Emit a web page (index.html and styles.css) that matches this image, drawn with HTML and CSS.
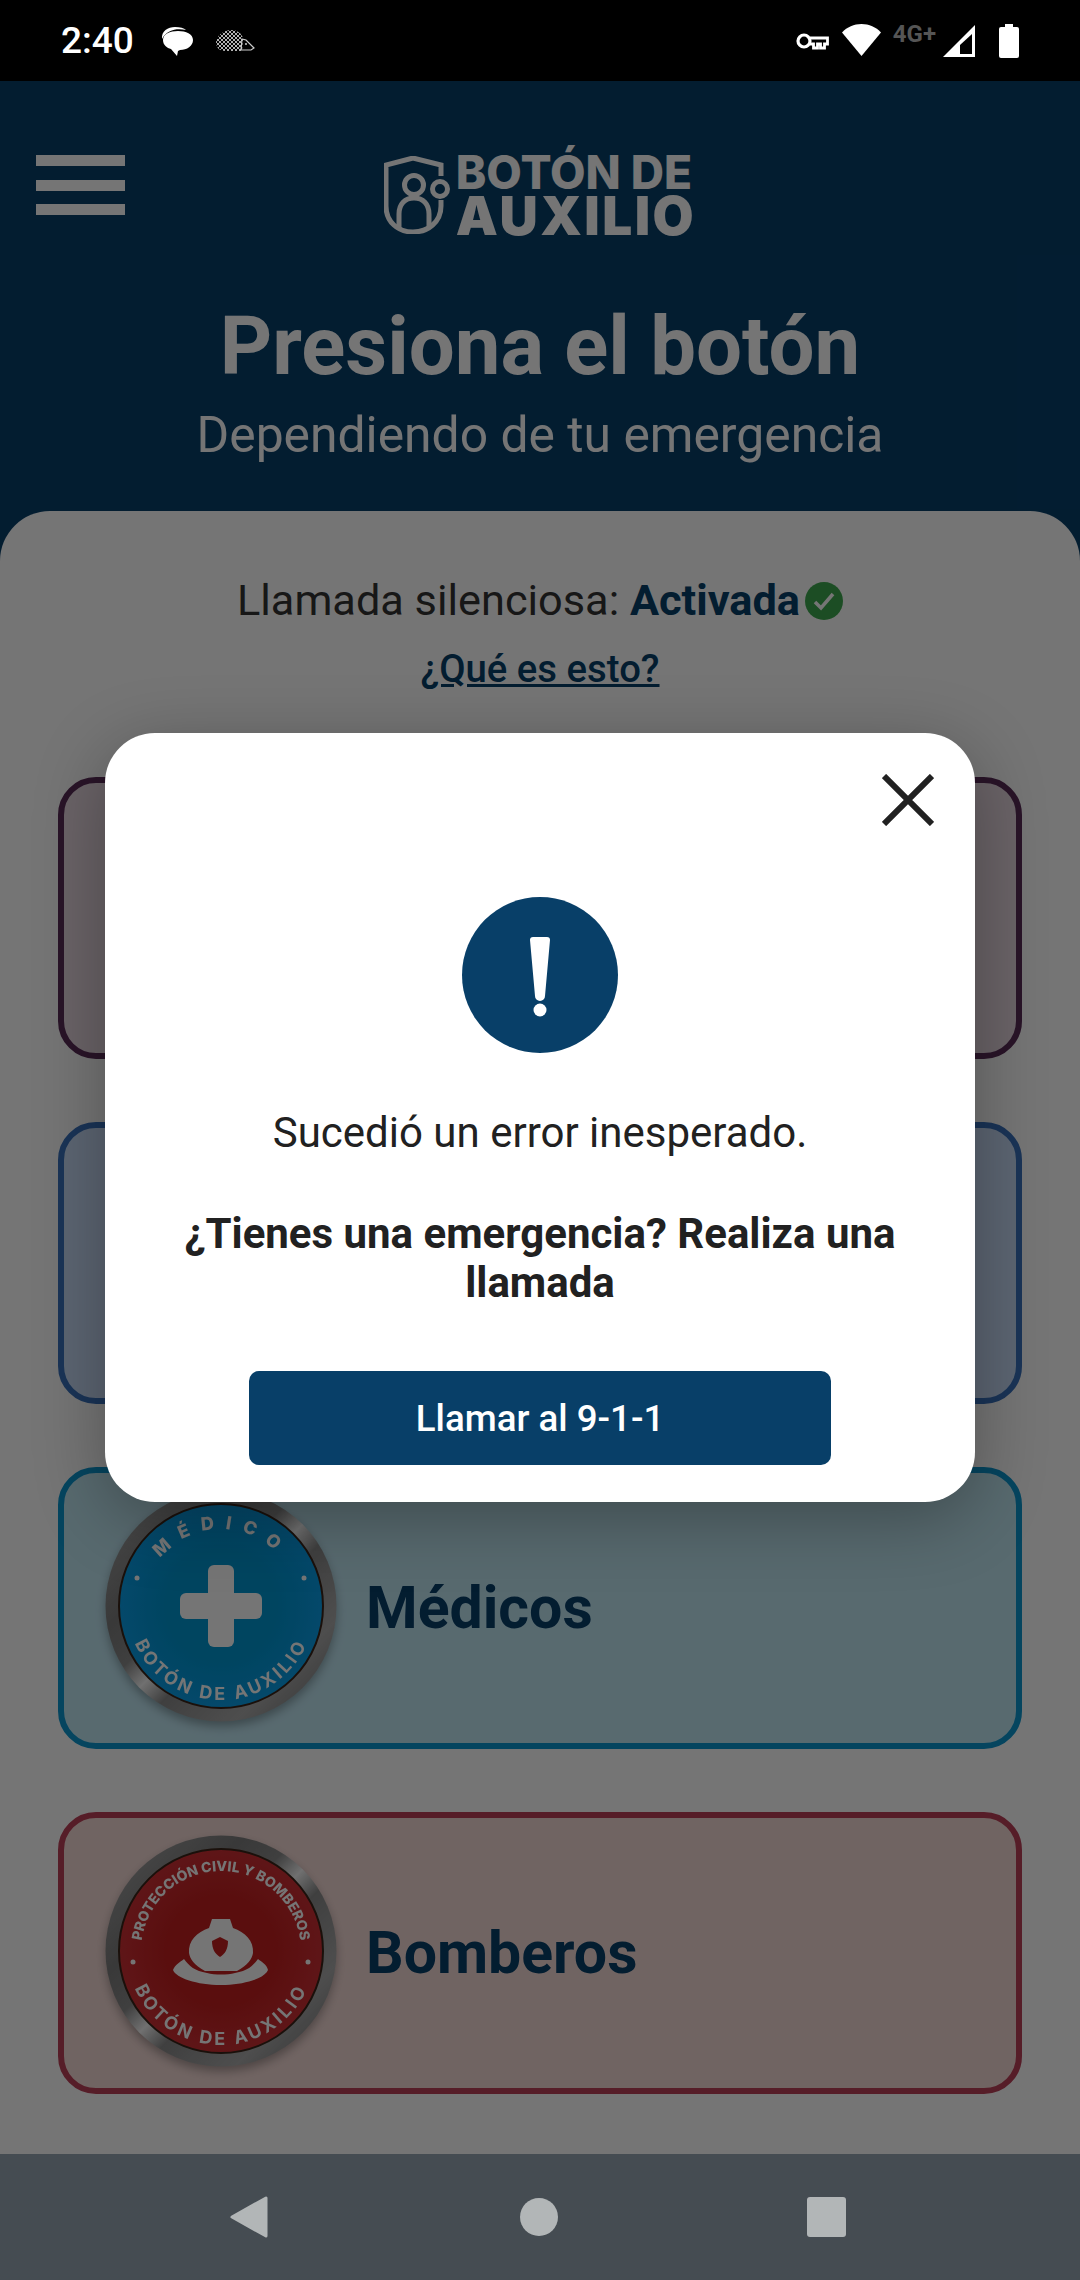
FILE: index.html
```html
<!DOCTYPE html>
<html lang="es">
	<head>
		<meta charset="utf-8">
		<title>Botón de Auxilio</title>
		<link rel="stylesheet" href="styles.css">
	</head>
	<body>
		<div class="phone">
			<div class="statusbar">
				<div class="status-left">
					<span class="clock">2:40</span>
					<svg class="ic-chat" width="32" height="30" viewBox="0 0 32 30"><path d="M1 13C0 5 7 1 14 1c5 0 9 1 11 3C17 2 6 3 1 13z" fill="#fff"/><path d="M2 14C2 8 9 5 17 5s15 3 15 9-6 10-13 10l-2 1-1 5-6-7c-4-1-8-4-8-9z" fill="#fff"/></svg>
					<svg class="ic-hog" width="40" height="24" viewBox="0 0 40 24">
						<defs>
							<pattern id="spines" width="4" height="4" patternUnits="userSpaceOnUse"><circle cx="1" cy="1" r="1" fill="#eee"/><circle cx="3" cy="3" r="1" fill="#eee"/></pattern>
						</defs>
						<path d="M1 13C2 6 9 1 16 1c6 0 10 3 12 8L27 22H10C4 22 1 18 1 13z" fill="url(#spines)"/>
						<path d="M27 10l4 1 8 8-3 2H26z" fill="none" stroke="#ccc" stroke-width="1.200"/>
						<circle cx="31" cy="15" r="1" fill="#ccc"/>
					</svg>
				</div>
				<div class="status-right">
					<svg class="ic-key" width="33" height="18" viewBox="0 0 33 18"><circle cx="8" cy="9" r="6" fill="none" stroke="#fff" stroke-width="3.200"/><path d="M14 6h17.500v6h-3v4h-4v-4h-3v4h-4v-4H14" fill="none" stroke="#fff" stroke-width="2.800"/></svg>
					<svg class="ic-wifi" width="39" height="32" viewBox="0 0 39 32"><path d="M0 8.500C5 3 12 0 19.500 0S34 3 39 8.500L19.500 32z" fill="#fff"/></svg>
					<span class="net">4G+</span>
					<svg class="ic-signal" width="32" height="32" viewBox="0 0 32 32"><path d="M32 0v32H0z" fill="#fff"/><path d="M17 20L29 9v20H17z" fill="#000"/></svg>
					<svg class="ic-batt" width="20" height="34" viewBox="0 0 20 34"><path d="M6 0h8v3h4a2 2 0 0 1 2 2v27a2 2 0 0 1-2 2H2a2 2 0 0 1-2-2V5a2 2 0 0 1 2-2h4z" fill="#fff"/></svg>
				</div>
			</div>

			<div class="screen">
				<header class="top">
					<div class="topbar">
						<div class="burger"><i></i><i></i><i></i></div>
						<div class="logo">
							<svg width="66" height="78" viewBox="0 0 66 78">
								<path d="M57 20V9L29 2 2 9V50C2 66 14 76 29 76S57 66 57 50V44" fill="none" stroke="#fff" stroke-width="5"/>
								<circle cx="30" cy="29" r="9.500" fill="none" stroke="#fff" stroke-width="5"/>
								<path d="M15 72V58C15 48 21 42 30 42S45 48 45 58V72" fill="none" stroke="#fff" stroke-width="5"/>
								<circle cx="56" cy="33" r="7.500" fill="none" stroke="#fff" stroke-width="5"/>
							</svg>
							<div class="logo-text">
								<span class="logo-a">BOTÓN DE</span>
								<span class="logo-b">AUXILIO</span>
							</div>
						</div>
					</div>
					<h1>Presiona el botón</h1>
					<p class="sub">Dependiendo de tu emergencia</p>
				</header>

				<main class="panel">
					<p class="silent">Llamada silenciosa: <b>Activada</b><svg class="ic-ok" width="38" height="38" viewBox="0 0 38 38"><circle cx="19" cy="19" r="19" fill="#3ea94f"/><path d="M10 20l6 6 12-14" fill="none" stroke="#fff" stroke-width="3.500"/></svg></p>
					<a class="what">¿Qué es esto?</a>

					<div class="card card-purple"></div>
					<div class="card card-blue"></div>
					<div class="card card-cyan">
						<svg class="badge" width="232" height="232" viewBox="0 0 232 232">
							<defs>
								<linearGradient id="ring" x1="0" y1="0" x2="1" y2="1">
									<stop offset="0" stop-color="#aaa"/><stop offset=".3" stop-color="#7c7c7c"/><stop offset=".42" stop-color="#8a8a8a"/><stop offset=".5" stop-color="#f4f4f4"/><stop offset=".58" stop-color="#8a8a8a"/><stop offset=".78" stop-color="#aaa"/><stop offset="1" stop-color="#6a6a6a"/>
								</linearGradient>
								<radialGradient id="blue"><stop offset=".55" stop-color="#0096d2"/><stop offset="1" stop-color="#0a9fe8"/></radialGradient>
								<path id="c-top" d="M39 116a77 77 0 0 1 154 0"/>
								<path id="c-bot" d="M22 116a94 94 0 0 0 188 0"/>
							</defs>
							<circle cx="116" cy="116" r="115.500" fill="url(#ring)"/>
							<circle cx="116" cy="116" r="102" fill="url(#blue)" stroke="#3a2418" stroke-width="2"/>
							<text class="badge-t"><textPath href="#c-top" startOffset="50%" text-anchor="middle" letter-spacing="11">MÉDICO</textPath></text>
							<text class="badge-t badge-b"><textPath href="#c-bot" startOffset="50%" text-anchor="middle" letter-spacing="3">BOTÓN DE AUXILIO</textPath></text>
							<circle cx="32" cy="88" r="2.500" fill="#fff"/><circle cx="199" cy="88" r="2.500" fill="#fff"/>
							<rect x="103" y="75" width="26" height="82" rx="6" fill="#fff"/>
							<rect x="75" y="103" width="82" height="26" rx="6" fill="#fff"/>
						</svg>
						<span class="card-label">Médicos</span>
					</div>
					<div class="card card-red">
						<svg class="badge" width="232" height="232" viewBox="0 0 232 232">
							<defs>
								<radialGradient id="red"><stop offset=".55" stop-color="#c42020"/><stop offset="1" stop-color="#cf3035"/></radialGradient>
								<path id="r-top" d="M36 116a80 80 0 0 1 160 0"/>
							</defs>
							<circle cx="116" cy="116" r="115.500" fill="url(#ring)"/>
							<circle cx="116" cy="116" r="102" fill="url(#red)" stroke="#3a2418" stroke-width="2"/>
							<text class="badge-t badge-s"><textPath href="#r-top" startOffset="50%" text-anchor="middle">PROTECCIÓN CIVIL Y BOMBEROS</textPath></text>
							<text class="badge-t badge-b"><textPath href="#c-bot" startOffset="50%" text-anchor="middle" letter-spacing="3">BOTÓN DE AUXILIO</textPath></text>
							<circle cx="28" cy="127" r="2.500" fill="#fff"/><circle cx="203" cy="127" r="2.500" fill="#fff"/>
							<path d="M107 84h18l3 9c12 4 21 13 20 25-1 6-5 12-16 18H100c-11-6-15-12-16-18-1-12 8-21 20-25z" fill="#fff"/>
							<path d="M115 102l8 4c0 8-3 13-8 16-5-3-8-8-8-16z" fill="#c42020"/>
							<path d="M68 135c2-5 7-8 11-11 5 7 11 12 23 14 8 2 20 2 28 0 12-2 18-7 23-14 4 3 9 6 10 11-3 8-23 15-47 15s-45-7-48-15z" fill="#fff"/>
						</svg>
						<span class="card-label">Bomberos</span>
					</div>
				</main>

				<div class="scrim"></div>

				<div class="dialog">
					<svg class="close" width="52" height="52" viewBox="0 0 52 52"><path d="M2 2l48 48M50 2L2 50" stroke="#212121" stroke-width="6"/></svg>
					<svg class="alert" width="156" height="156" viewBox="0 0 156 156"><circle cx="78" cy="78" r="78" fill="#083f68"/><path d="M68 43a3 3 0 0 1 3-3h14a3 3 0 0 1 3 3l-5 56a5 5 0 0 1-10 0z" fill="#fff"/><circle cx="78" cy="113" r="6.500" fill="#fff"/></svg>
					<p class="msg">Sucedió un error inesperado.</p>
					<p class="ask">¿Tienes una emergencia? Realiza una llamada</p>
					<button class="call">Llamar al 9-1-1</button>
				</div>
			</div>

			<nav class="navbar">
				<svg width="38" height="42" viewBox="0 0 38 42"><path d="M36 2v38L2 21z" fill="#b2b6b7" stroke="#b2b6b7" stroke-width="3" stroke-linejoin="round"/></svg>
				<span class="nav-home"></span>
				<span class="nav-recent"></span>
			</nav>
		</div>
	</body>
</html>
```

FILE: styles.css
```css
* {
	box-sizing: border-box;
}
html, body {
	margin: 0;
	padding: 0;
}
body {
	font-family: Roboto, sans-serif;
	background-color: #000;
}
.phone {
	width: 1080px;
	height: 2280px;
	display: flex;
	flex-direction: column;
	overflow: hidden;
}

.statusbar {
	height: 81px;
	flex: none;
	background-color: #000;
	display: flex;
	justify-content: space-between;
	align-items: center;
	padding: 0 61px;
	color: #fff;
}
.status-left, .status-right {
	display: flex;
	align-items: center;
}
.clock {
	font-size: 37px;
	font-weight: 500;
	margin-right: 27px;
}
.ic-chat {
	margin-right: 22px;
}
.ic-wifi {
	margin: -2px 12px 0 13px;
}
.net {
	font-size: 24px;
	font-weight: 700;
	color: #555;
	margin: -14px 7px 0 0;
}
.ic-batt {
	margin-left: 24px;
}

.screen {
	flex: 1;
	position: relative;
	display: flex;
	flex-direction: column;
	background-color: #073f6a;
}
.top {
	height: 430px;
	flex: none;
	text-align: center;
	color: #fff;
}
.topbar {
	height: 153px;
	display: grid;
	grid-template-columns: 1fr auto 1fr;
	align-items: start;
	padding-top: 75px;
}
.burger {
	margin: -1px 0 0 36px;
	width: 89px;
	display: flex;
	flex-direction: column;
	gap: 13.500px;
}
.burger i {
	height: 11px;
	background-color: #fff;
}
.logo {
	display: flex;
	align-items: flex-start;
	gap: 6px;
}
.logo-text {
	display: flex;
	flex-direction: column;
	margin-top: -4px;
	font-family: Inter, sans-serif;
	text-align: left;
}
.logo-a {
	font-size: 46px;
	font-weight: 800;
	line-height: 41px;
}
.logo-b {
	font-size: 53px;
	font-weight: 900;
	line-height: 46px;
	letter-spacing: 2.500px;
}
h1 {
	font-size: 81.500px;
	font-weight: 700;
	line-height: 94px;
	margin: 65px 0 0 0;
}
.sub {
	font-size: 49.800px;
	line-height: 60px;
	margin: 12px 0 0 0;
}

.panel {
	flex: 1;
	background-color: #fff;
	border-radius: 50px 50px 0 0;
	display: flex;
	flex-direction: column;
	align-items: center;
	padding: 66px 58px 0;
}
.silent {
	margin: 0;
	font-size: 43.300px;
	line-height: 48px;
	color: #333;
	display: flex;
	align-items: center;
	white-space: pre;
}
.silent b {
	color: #073f6a;
}
.ic-ok {
	margin-left: 5px;
}
.what {
	margin-top: 20px;
	font-size: 38.300px;
	font-weight: 500;
	line-height: 48px;
	color: #073f6a;
	text-decoration: underline;
}
.card {
	width: 100%;
	height: 282px;
	flex: none;
	border: 6px solid;
	border-radius: 38px;
	display: flex;
	align-items: center;
	padding: 0 0 4px 41px;
	gap: 29px;
}
.card + .card {
	margin-top: 63px;
}
.card-purple {
	margin-top: 84px;
	border-color: #5a2c58;
	background-color: #e6d7e0;
}
.card-blue {
	border-color: #3a72bd;
	background-color: #c8dcf8;
}
.card-cyan {
	border-color: #0b97d0;
	background-color: #c0e6f2;
}
.card-red {
	border-color: #bc4058;
	background-color: #f4dad6;
}
.card-label {
	padding-top: 3px;
	font-size: 59px;
	font-weight: 700;
	color: #073f6a;
}
.badge {
	flex: none;
	filter: drop-shadow(0 5px 5px rgba(0, 0, 0, .3));
}
.badge-t {
	font-family: Inter, sans-serif;
	font-size: 18px;
	font-weight: 800;
	fill: #fff;
}
.badge-b {
	font-weight: 700;
}
.badge-s {
	font-size: 14px;
}

/* over the page */
.scrim {
	position: absolute;
	inset: 0;
	background-color: rgba(0, 0, 0, .54);
}
.dialog {
	position: absolute;
	left: 105px;
	top: 652px;
	width: 870px;
	height: 769px;
	background-color: #fff;
	border-radius: 50px;
	box-shadow: 0 16px 70px rgba(0, 0, 0, .3);
	display: flex;
	flex-direction: column;
	align-items: center;
	padding: 164px 60px 0;
}
.close {
	position: absolute;
	top: 41px;
	right: 41px;
}
.msg {
	margin: 56px 0 0 0;
	font-size: 42px;
	line-height: 48px;
	color: #212121;
}
.ask {
	margin: 52px 0 0 0;
	font-size: 42px;
	font-weight: 700;
	line-height: 49px;
	color: #212121;
	text-align: center;
}
.call {
	margin-top: 64px;
	width: 582px;
	height: 94px;
	border: none;
	border-radius: 10px;
	background-color: #083f68;
	color: #fff;
	font-family: Roboto, sans-serif;
	font-size: 36.700px;
	font-weight: 500;
}

.navbar {
	height: 126px;
	flex: none;
	background-color: #454c52;
	display: flex;
	align-items: center;
	padding-left: 230px;
}
.nav-home {
	width: 38px;
	height: 38px;
	margin-left: 252px;
	border-radius: 50%;
	background-color: #b2b6b7;
}
.nav-recent {
	width: 39px;
	height: 40px;
	margin-left: 249px;
	border-radius: 3px;
	background-color: #b2b6b7;
}
```
